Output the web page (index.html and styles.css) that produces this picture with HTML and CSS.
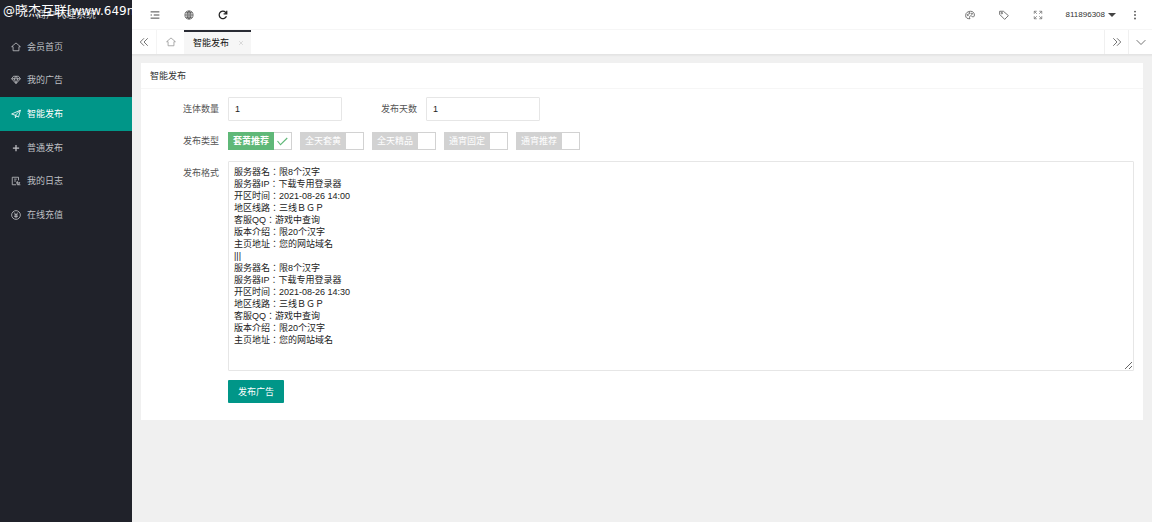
FILE: index.html
```html
<!DOCTYPE html>
<html lang="zh-CN">
<head>
<meta charset="utf-8">
<title>智能发布</title>
<link rel="stylesheet" href="styles.css">
</head>
<body>
<div class="app">
  <aside class="sidebar">
    <div class="logo">商户代理系统</div>
    <div class="watermark">@<span class="watermark-cn">晓杰互联</span>[www.649n</div>
    <nav class="menu">
      <a class="menu-item" href="#"><svg class="icon" viewBox="0 0 16 16"><path d="M1 7.500 8 1.500l7 6h-2.300V14H3.300V7.500z"/></svg>会员首页</a>
      <a class="menu-item" href="#"><svg class="icon" viewBox="0 0 16 16"><path d="M4 2h8l3 4-7 8-7-8zM1 6h14M5 6l3 7 3-7M5 6l3-4 3 4"/></svg>我的广告</a>
      <a class="menu-item active" href="#"><svg class="icon" viewBox="0 0 16 16"><path d="M1 8 15 2l-3 11-5-3zM7 10l8-8M7 10v4l2-3"/></svg>智能发布</a>
      <a class="menu-item" href="#"><svg class="icon bold" viewBox="0 0 16 16"><path d="M8 3v10M3 8h10"/></svg>普通发布</a>
      <a class="menu-item" href="#"><svg class="icon" viewBox="0 0 16 16"><path d="M8 14H2V2h10v5M5 5h4M5 8h3M10 8v6h5M12 14l2-4M8 11h6"/></svg>我的日志</a>
      <a class="menu-item" href="#"><svg class="icon" viewBox="0 0 16 16"><circle cx="8" cy="8" r="7"/><path d="m5 4 3 4 3-4M8 8v5M5 8h6M5 10.500h6"/></svg>在线充值</a>
    </nav>
  </aside>
  <div class="main">
    <header class="topbar">
      <div class="tools">
        <button class="tool" aria-label="收起菜单"><svg class="icon dark" viewBox="0 0 16 16"><path d="M1 3h14M6 8h9M1 13h14M1 8h2"/></svg></button>
        <button class="tool" aria-label="网站"><svg class="icon" viewBox="0 0 16 16"><circle cx="8" cy="8" r="6.500"/><ellipse cx="8" cy="8" rx="3" ry="6.500"/><path d="M1.500 8h13M8 1.500v13M3 4.500h10M3 11.500h10"/></svg></button>
        <button class="tool" aria-label="刷新"><svg class="icon dark bold" viewBox="0 0 16 16"><path d="M13.500 10A6 6 0 1 1 12 3.500l2 2M14 1v5H9"/></svg></button>
      </div>
      <div class="tools right">
        <button class="tool" aria-label="主题"><svg class="icon" viewBox="0 0 16 16"><path d="M1 9C1 4 5 2 9 2c4 0 6 3 6 6 0 3-2 4-4 2-3-2-5 1-3 4-4 0-7-1-7-5z"/><circle cx="4.500" cy="8" r="1"/><circle cx="7" cy="5" r="1"/><circle cx="11" cy="6" r="1"/></svg></button>
        <button class="tool" aria-label="便签"><svg class="icon" viewBox="0 0 16 16"><path d="M1 2h6l8 7-6 6-8-8z"/><circle cx="4.500" cy="5" r="1.200"/></svg></button>
        <button class="tool" aria-label="全屏"><svg class="icon mid" viewBox="0 0 16 16"><path d="M2 6V2h4M2 2l4 4M10 2h4v4M14 2l-4 4M2 10v4h4M2 14l4-4M14 10v4h-4M14 14l-4-4"/></svg></button>
        <button class="user">811896308<span class="caret"></span></button>
        <button class="more" aria-label="更多"><svg class="icon solid" viewBox="0 0 16 16"><circle cx="8" cy="2.500" r="1.500"/><circle cx="8" cy="8" r="1.500"/><circle cx="8" cy="13.500" r="1.500"/></svg></button>
      </div>
    </header>
    <div class="tabs">
      <button class="tab-btn" aria-label="向左"><svg class="icon" viewBox="0 0 16 16"><path d="M8 2 2 8l6 6M14 2 8 8l6 6"/></svg></button>
      <button class="tab-btn home" aria-label="首页"><svg class="icon pale" viewBox="0 0 16 16"><path d="M1 7.500 8 1.500l7 6h-2.300V14H3.300V7.500z"/></svg></button>
      <div class="tab"><a class="tab-link" href="#">智能发布</a><button class="tab-close" aria-label="关闭"><svg class="icon small" viewBox="0 0 16 16"><path d="m3 3 10 10M13 3 3 13"/></svg></button></div>
      <button class="tab-btn line push" aria-label="向右"><svg class="icon" viewBox="0 0 16 16"><path d="m2 2 6 6-6 6M8 2l6 6-6 6"/></svg></button>
      <button class="tab-btn line" aria-label="展开"><svg class="icon" viewBox="0 0 16 16"><path d="m1 5 7 7 7-7"/></svg></button>
    </div>
    <main class="card">
      <h1 class="card-title">智能发布</h1>
      <form class="form">
        <div class="row">
          <label class="label" for="count">连体数量</label>
          <input class="input" id="count" type="text" value="1">
          <label class="label second" for="days">发布天数</label>
          <input class="input" id="days" type="text" value="1">
        </div>
        <div class="row">
          <span class="label">发布类型</span>
          <div class="checks">
            <label class="check on"><span class="check-text">套黄推荐</span><input class="box" type="checkbox" checked><svg class="tick" viewBox="0 0 16 16"><path d="m2 8 4 5 9-9"/></svg></label>
            <label class="check"><span class="check-text">全天套黄</span><input class="box" type="checkbox"></label>
            <label class="check"><span class="check-text">全天精品</span><input class="box" type="checkbox"></label>
            <label class="check"><span class="check-text">通宵固定</span><input class="box" type="checkbox"></label>
            <label class="check"><span class="check-text">通宵推荐</span><input class="box" type="checkbox"></label>
          </div>
        </div>
        <div class="row top">
          <label class="label format" for="content">发布格式</label>
          <textarea class="textarea" id="content" lang="zh-TW">服务器名：限8个汉字
服务器IP：下载专用登录器
开区时间：2021-08-26 14:00
地区线路：三线ＢＧＰ
客服QQ：游戏中查询
版本介绍：限20个汉字
主页地址：您的网站域名
|||
服务器名：限8个汉字
服务器IP：下载专用登录器
开区时间：2021-08-26 14:30
地区线路：三线ＢＧＰ
客服QQ：游戏中查询
版本介绍：限20个汉字
主页地址：您的网站域名</textarea>
        </div>
        <div class="row">
          <span class="label"></span>
          <button class="submit" type="button">发布广告</button>
        </div>
      </form>
    </main>
  </div>
</div>
</body>
</html>
```
FILE: styles.css
```css
* { box-sizing: border-box; }
body {
  margin: 0;
  background: #f0f0f0;
  color: #555;
  font: 9px/12px "Liberation Sans", "Noto Sans CJK SC", sans-serif;
}
button, input, textarea { font: inherit; color: inherit; }
button { padding: 0; border: 0; background: none; }
a { color: inherit; text-decoration: none; }
.app { display: flex; min-height: 100vh; }

.icon { display: block; width: 10px; height: 10px; fill: none; stroke: currentColor; stroke-width: 1.3; }
.icon.bold { stroke-width: 2; }
.icon.dark { color: #222; }
.icon.mid { color: #777; }
.icon.pale { color: #999; }
.icon.small { width: 6px; height: 6px; color: #bbb; }
.icon.solid { fill: currentColor; stroke: none; }

.sidebar { position: relative; flex: 0 0 132px; overflow: hidden; background: #20222a; color: #bfc0c4; }
.logo { height: 30px; font-size: 10px; line-height: 30px; text-align: center; }
.watermark {
  position: absolute;
  top: 1px;
  left: 3px;
  color: #fff;
  font: 12px/18px "DejaVu Sans", sans-serif;
  white-space: nowrap;
}
.watermark-cn { font: 13px/18px "Noto Sans CJK SC", sans-serif; }
.menu { display: grid; grid-auto-rows: 1fr; height: 202px; }
.menu-item { display: flex; align-items: center; gap: 6px; padding-left: 11px; }
.menu-item.active { background: #009688; color: #fff; }

.main { flex: 1; min-width: 0; }
.topbar { display: flex; justify-content: space-between; height: 30px; border-bottom: 1px solid #f6f6f6; background: #fff; }
.tools { display: flex; align-items: center; padding-left: 6px; }
.tool { display: grid; place-items: center; width: 34px; height: 30px; }
.user { display: flex; align-items: center; gap: 3px; margin-left: 11px; font-size: 8px; color: #333; }
.caret { border: 4px solid transparent; border-top-color: #444; border-bottom: 0; }
.more { margin: 0 12px 0 14px; }

.tabs { display: flex; height: 25px; border-bottom: 1px solid #e4e4e4; background: #fff; box-shadow: 0 1px 1px #e8e8e8; }
.tab-btn { display: grid; place-items: center; width: 24px; }
.tab-btn.home { width: 28px; border-left: 1px solid #f4f4f4; }
.tab-btn.line { width: 24px; border-left: 1px solid #f0f0f0; }
.tab-btn.push { margin-left: auto; }
.tab { display: flex; align-items: center; gap: 9px; padding: 0 7px 0 9px; border-top: 2px solid #292b34; background: #f6f6f6; color: #111; }

.card { margin: 8px 9px 0; background: #fff; }
.card-title { margin: 0; padding: 7px 9px 6px; border-bottom: 1px solid #f6f6f6; color: #333; font-size: 9px; font-weight: 400; line-height: 12px; }
.form { padding: 8px 9px 6px 0; }
.row { display: flex; align-items: center; margin-bottom: 11px; }
.row.top { align-items: flex-start; margin-bottom: 9px; }
.label { flex: 0 0 78px; margin-right: 9px; text-align: right; }
.label.second { flex-basis: 75px; }
.label.format { padding-top: 6px; }
.input { width: 114px; height: 24px; padding: 0 6px; border: 1px solid #e6e6e6; border-radius: 1px; color: #222; }
.checks { display: flex; gap: 8px; }
.check { display: grid; grid-template-columns: 46px 18px; align-items: center; height: 18px; background: #d2d2d2; color: #fff; text-align: center; }
.check.on { background: #5fb878; font-weight: 700; }
.box { grid-area: 1 / 2; width: 18px; height: 18px; margin: 0; border: 1px solid #d2d2d2; border-left: 0; background: #fff; appearance: none; }
.tick { grid-area: 1 / 2; z-index: 1; width: 12px; height: 12px; margin-left: 2px; fill: none; stroke: #5fb878; stroke-width: 1.5; pointer-events: none; }
.textarea {
  flex: 1;
  min-width: 0;
  height: 210px;
  padding: 4px 5px;
  border: 1px solid #e6e6e6;
  border-radius: 1px;
  color: #222;
  font-family: "Liberation Sans", "Noto Sans CJK TC", sans-serif;
  resize: vertical;
}
.submit { height: 23px; padding: 0 10px; border-radius: 1px; background: #009688; color: #fff; }
```
